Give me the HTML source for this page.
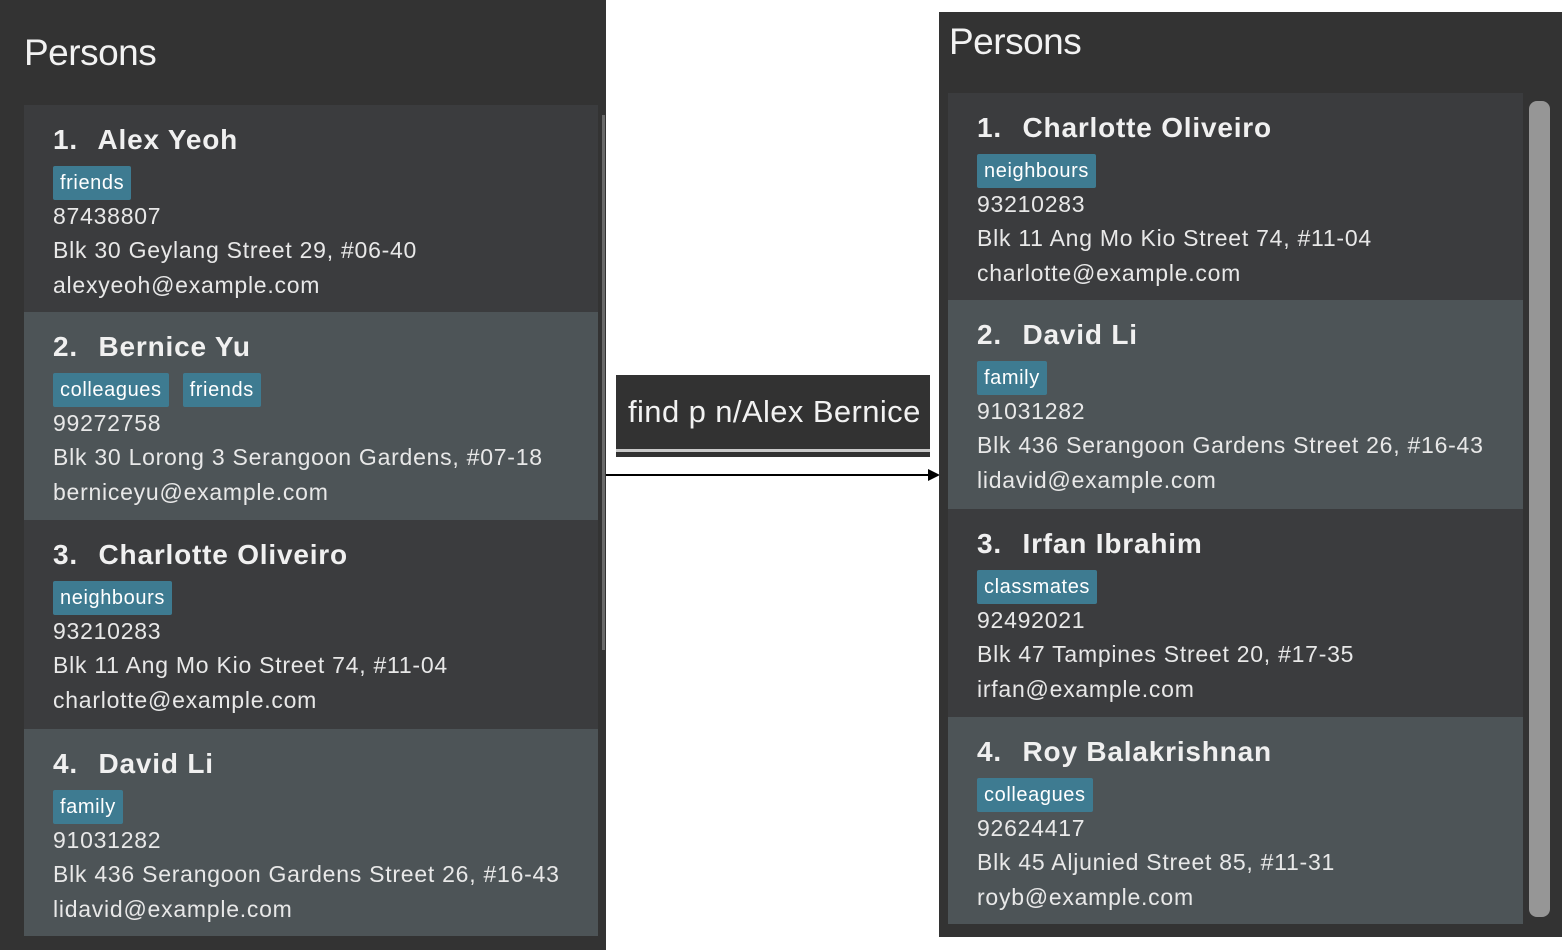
<!DOCTYPE html>
<html><head><style>
*{margin:0;padding:0;box-sizing:border-box}
body{width:1562px;height:950px;background:#fff;position:relative;overflow:hidden;font-family:"Liberation Sans",sans-serif}
.panel{position:absolute;background:#333333}
.title{position:absolute;color:#f2f2f2;font-size:37px;font-weight:300;letter-spacing:-0.5px}
.card{position:absolute;padding-left:29px;color:#e6e6e6}
.c1{background:#3b3c3e}.c2{background:#4d5457}
.name{font-size:28px;font-weight:bold;color:#f0f0f0;position:absolute;left:29px;top:19px;white-space:nowrap;letter-spacing:0.8px}
.name span{margin-right:12px}
.tags{position:absolute;left:29px;top:61px}
.tag{display:inline-block;background:#3e7b91;color:#fff;font-size:20px;padding:2px 7px;height:34px;line-height:30px;border-radius:2px;margin-right:14px;letter-spacing:0.6px}
.ln{position:absolute;left:29px;font-size:23px;white-space:nowrap;color:#e8e8e8;letter-spacing:0.75px}
</style></head><body>
<div class="panel" style="left:0;top:0;width:606px;height:950px"></div>
<div class="title" style="left:24px;top:32px">Persons</div>
<div style="position:absolute;left:602px;top:115px;width:3px;height:535px;background:#6a6a6a"></div>

<div class="card c1" style="left:24px;top:105px;width:574px;height:207px">
<div class="name"><span>1.</span> Alex Yeoh</div><div class="tags"><span class="tag">friends</span></div>
<div class="ln" style="top:98px">87438807</div><div class="ln" style="top:132px">Blk 30 Geylang Street 29, #06-40</div><div class="ln" style="top:167px">alexyeoh@example.com</div></div>
<div class="card c2" style="left:24px;top:312px;width:574px;height:208px">
<div class="name"><span>2.</span> Bernice Yu</div><div class="tags"><span class="tag">colleagues</span><span class="tag">friends</span></div>
<div class="ln" style="top:98px">99272758</div><div class="ln" style="top:132px">Blk 30 Lorong 3 Serangoon Gardens, #07-18</div><div class="ln" style="top:167px">berniceyu@example.com</div></div>
<div class="card c1" style="left:24px;top:520px;width:574px;height:209px">
<div class="name"><span>3.</span> Charlotte Oliveiro</div><div class="tags"><span class="tag">neighbours</span></div>
<div class="ln" style="top:98px">93210283</div><div class="ln" style="top:132px">Blk 11 Ang Mo Kio Street 74, #11-04</div><div class="ln" style="top:167px">charlotte@example.com</div></div>
<div class="card c2" style="left:24px;top:729px;width:574px;height:207px">
<div class="name"><span>4.</span> David Li</div><div class="tags"><span class="tag">family</span></div>
<div class="ln" style="top:98px">91031282</div><div class="ln" style="top:132px">Blk 436 Serangoon Gardens Street 26, #16-43</div><div class="ln" style="top:167px">lidavid@example.com</div></div>

<div style="position:absolute;left:616px;top:375px;width:314px;height:82px;background:#323232"></div>
<div style="position:absolute;left:628px;top:394px;color:#f2f2f2;font-size:31px;font-weight:300;white-space:nowrap;letter-spacing:0.4px">find p n/Alex Bernice</div>
<div style="position:absolute;left:616px;top:449px;width:314px;height:3px;background:#c8c8c8"></div>
<div style="position:absolute;left:606px;top:474px;width:324px;height:2px;background:#000"></div>
<div style="position:absolute;left:928px;top:469px;width:0;height:0;border-left:12px solid #000;border-top:6px solid transparent;border-bottom:6px solid transparent"></div>

<div class="panel" style="left:939px;top:12px;width:623px;height:925px"></div>
<div class="title" style="left:949px;top:21px">Persons</div>
<div style="position:absolute;left:1529px;top:101px;width:21px;height:816px;background:#969696;border-radius:8px"></div>

<div class="card c1" style="left:948px;top:93px;width:575px;height:207px">
<div class="name"><span>1.</span> Charlotte Oliveiro</div><div class="tags"><span class="tag">neighbours</span></div>
<div class="ln" style="top:98px">93210283</div><div class="ln" style="top:132px">Blk 11 Ang Mo Kio Street 74, #11-04</div><div class="ln" style="top:167px">charlotte@example.com</div></div>
<div class="card c2" style="left:948px;top:300px;width:575px;height:209px">
<div class="name"><span>2.</span> David Li</div><div class="tags"><span class="tag">family</span></div>
<div class="ln" style="top:98px">91031282</div><div class="ln" style="top:132px">Blk 436 Serangoon Gardens Street 26, #16-43</div><div class="ln" style="top:167px">lidavid@example.com</div></div>
<div class="card c1" style="left:948px;top:509px;width:575px;height:208px">
<div class="name"><span>3.</span> Irfan Ibrahim</div><div class="tags"><span class="tag">classmates</span></div>
<div class="ln" style="top:98px">92492021</div><div class="ln" style="top:132px">Blk 47 Tampines Street 20, #17-35</div><div class="ln" style="top:167px">irfan@example.com</div></div>
<div class="card c2" style="left:948px;top:717px;width:575px;height:207px">
<div class="name"><span>4.</span> Roy Balakrishnan</div><div class="tags"><span class="tag">colleagues</span></div>
<div class="ln" style="top:98px">92624417</div><div class="ln" style="top:132px">Blk 45 Aljunied Street 85, #11-31</div><div class="ln" style="top:167px">royb@example.com</div></div>
</body></html>
